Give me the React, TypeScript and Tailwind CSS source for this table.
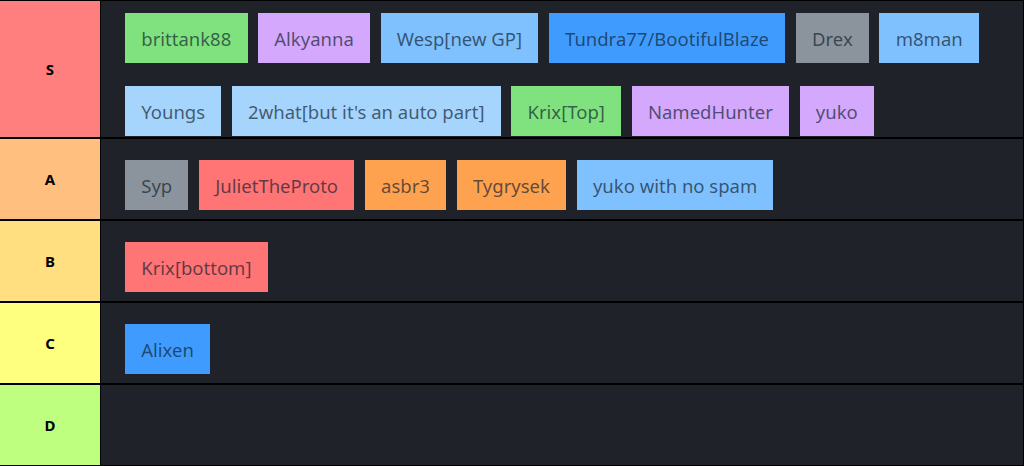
import React from "react";

type Item = { name: string; bg: string };

const GREEN = "bg-[#7fe27f]";
const PURPLE = "bg-[#d3a8fd]";
const LBLUE = "bg-[#7fc1fe]";
const BLUE = "bg-[#3f9cfe]";
const GRAY = "bg-[#8b949d]";
const PALE = "bg-[#a5d4fd]";
const RED = "bg-[#ff7474]";
const ORANGE = "bg-[#ffa24f]";

const tiers: { label: string; color: string; rowCls: string; items: Item[] }[] = [
  {
    label: "S",
    color: "bg-[#ff7f7f]",
    rowCls: "pt-[12px] pb-[1px] min-h-[136px]",
    items: [
      { name: "brittank88", bg: GREEN },
      { name: "Alkyanna", bg: PURPLE },
      { name: "Wesp[new GP]", bg: LBLUE },
      { name: "Tundra77/BootifulBlaze", bg: BLUE },
      { name: "Drex", bg: GRAY },
      { name: "m8man", bg: LBLUE },
      { name: "Youngs", bg: PALE },
      { name: "2what[but it's an auto part]", bg: PALE },
      { name: "Krix[Top]", bg: GREEN },
      { name: "NamedHunter", bg: PURPLE },
      { name: "yuko", bg: PURPLE },
    ],
  },
  {
    label: "A",
    color: "bg-[#ffbf7f]",
    rowCls: "pt-[21px] pb-[9px] min-h-[80px]",
    items: [
      { name: "Syp", bg: GRAY },
      { name: "JulietTheProto", bg: RED },
      { name: "asbr3", bg: ORANGE },
      { name: "Tygrysek", bg: ORANGE },
      { name: "yuko with no spam", bg: LBLUE },
    ],
  },
  {
    label: "B",
    color: "bg-[#ffdf7f]",
    rowCls: "pt-[21px] pb-[9px] min-h-[80px]",
    items: [{ name: "Krix[bottom]", bg: RED }],
  },
  {
    label: "C",
    color: "bg-[#ffff7f]",
    rowCls: "pt-[21px] pb-[9px] min-h-[80px]",
    items: [{ name: "Alixen", bg: BLUE }],
  },
  {
    label: "D",
    color: "bg-[#bfff7f]",
    rowCls: "pt-[21px] pb-[9px] min-h-[80px]",
    items: [],
  },
];

export default function App() {
  return (
    <div
      className="w-[1024px] h-[466px] bg-black flex flex-col gap-[2px] pt-[1px] pb-[1px] overflow-hidden"
      style={{ fontFamily: "'Noto Sans', 'Open Sans', sans-serif" }}
    >
      {tiers.map((t) => (
        <div key={t.label} className="flex gap-[1px]">
          <div
            className={`${t.color} w-[100px] shrink-0 flex items-center justify-center text-[15px] font-bold text-black`}
          >
            {t.label}
          </div>
          <div
            className={`flex-1 bg-[#202229] mr-[1px] pl-[24px] pr-[20px] flex flex-wrap content-start gap-x-[10.5px] gap-y-[23px] ${t.rowCls}`}
          >
            {t.items.map((it) => (
              <div
                key={it.name}
                className={`${it.bg} h-[50px] px-[16.25px] flex items-center pt-[2px] text-[18.5px] text-[rgba(15,28,45,0.68)] whitespace-nowrap`}
              >
                {it.name}
              </div>
            ))}
          </div>
        </div>
      ))}
    </div>
  );
}
